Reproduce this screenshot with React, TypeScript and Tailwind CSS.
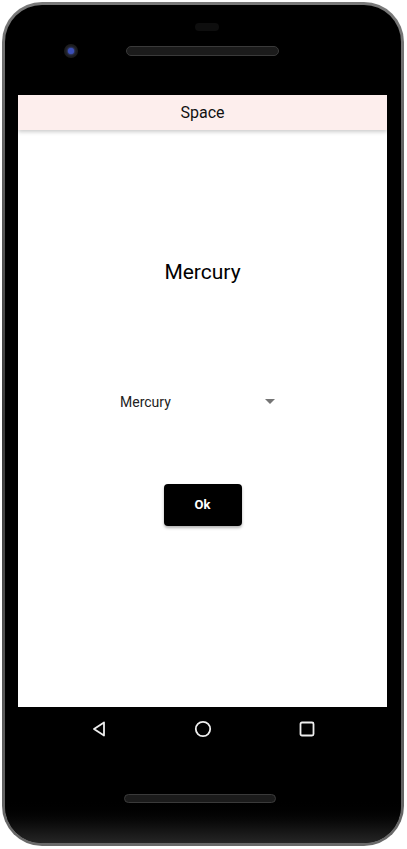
import { useState } from "react";

const PLANETS = ["Mercury", "Venus", "Earth", "Mars", "Jupiter", "Saturn", "Uranus", "Neptune"];

export default function App() {
    const [planet, setPlanet] = useState("Mercury");

    return (
        <div className="w-[407px] h-[849px] bg-white overflow-hidden" style={{ fontFamily: "Roboto, 'Noto Sans', sans-serif" }}>
            <div className="ml-[2px] mt-[2px] w-[402px] h-[844px] rounded-[40px] bg-gradient-to-b from-[#7a7a7a] via-[#3c3c3c] to-[#6a6a6a] p-[3px]">
                <div className="w-full h-full rounded-[37px] bg-black flex flex-col relative overflow-hidden">
                    {/* top bezel */}
                    <div className="h-[90px] relative">
                        <div className="absolute left-[190px] top-[18px] w-[24px] h-[8px] rounded-full bg-[#0e0e0e]" />
                        <div className="absolute left-[59px] top-[39px] w-[14px] h-[14px] rounded-full bg-[#1c1c1c] flex items-center justify-center">
                            <div className="w-[6px] h-[6px] rounded-full bg-[#3b4fb8] shadow-[0_0_3px_#5b73ff]" />
                        </div>
                        <div className="absolute left-[121px] top-[41px] w-[153px] h-[10px] rounded-full bg-[#1b1b1b] border border-[#3a3a3a]" />
                    </div>

                    {/* screen */}
                    <div className="ml-[13px] w-[369px] h-[612px] bg-white flex flex-col">
                        <div className="h-[35px] bg-[#fdeeed] flex items-center justify-center shadow-[0_2px_4px_rgba(0,0,0,0.2)] z-10">
                            <span className="text-[16px] text-[#111]">Space</span>
                        </div>
                        <div className="flex flex-col items-center">
                            <h1 className="mt-[128px] text-[21px] leading-[28px] text-black">{planet}</h1>
                            <label className="mt-[92px] w-[165px] h-[48px] relative flex items-center">
                                <span className="text-[14px] text-[#222]">{planet}</span>
                                <span className="absolute right-[10px] top-[21px] w-0 h-0 border-l-[5px] border-r-[5px] border-t-[5px] border-l-transparent border-r-transparent border-t-[#757575]" />
                                <select
                                    value={planet}
                                    onChange={e => setPlanet(e.target.value)}
                                    className="absolute inset-0 opacity-0"
                                >
                                    {PLANETS.map(p => (
                                        <option key={p} value={p}>{p}</option>
                                    ))}
                                </select>
                            </label>
                            <button className="mt-[58px] w-[78px] h-[42px] rounded-[4px] bg-black text-white text-[13px] font-bold shadow-[0_2px_3px_rgba(0,0,0,0.3)]">
                                Ok
                            </button>
                        </div>
                    </div>

                    {/* nav bar */}
                    <div className="ml-[13px] w-[369px] h-[44px] flex items-center justify-center">
                        <div className="w-[104px] flex justify-center">
                            <svg width="14" height="16" viewBox="0 0 14 16">
                                <path d="M12 1.5 L2 8 L12 14.5 Z" fill="none" stroke="#eee" strokeWidth="1.8" strokeLinejoin="round" />
                            </svg>
                        </div>
                        <div className="w-[104px] flex justify-center">
                            <svg width="18" height="18" viewBox="0 0 18 18">
                                <circle cx="9" cy="9" r="7.2" fill="none" stroke="#eee" strokeWidth="1.8" />
                            </svg>
                        </div>
                        <div className="w-[104px] flex justify-center">
                            <svg width="16" height="16" viewBox="0 0 16 16">
                                <rect x="1.5" y="1.5" width="13" height="13" rx="1.5" fill="none" stroke="#eee" strokeWidth="1.8" />
                            </svg>
                        </div>
                    </div>

                    {/* bottom bezel */}
                    <div className="flex-1 relative bg-gradient-to-b from-black via-black to-[#262626]">
                        <div className="absolute left-[119px] top-[43px] w-[152px] h-[9px] rounded-full bg-[#1b1b1b] border border-[#3a3a3a]" />
                    </div>
                </div>
            </div>
        </div>
    );
}
